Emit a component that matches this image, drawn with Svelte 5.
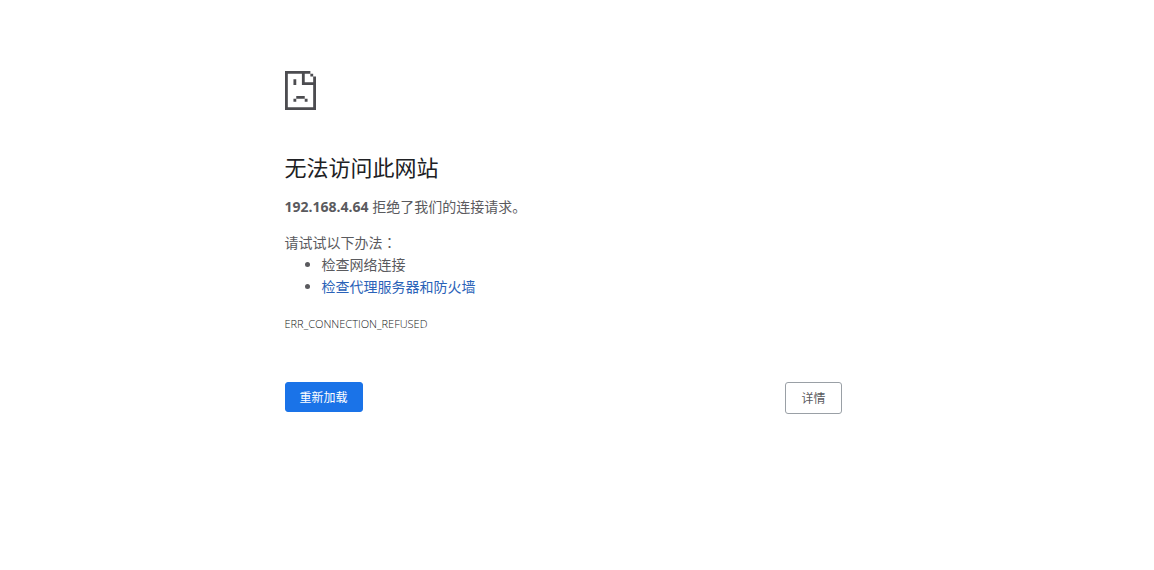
<script lang="ts">
	const host = '192.168.4.64';
	const errorCode = 'ERR_CONNECTION_REFUSED';

	let showDetails = $state(false);

	function reload() {
		location.reload();
	}
</script>

<main class="error-page">
	<div class="content">
		<svg class="icon" viewBox="0 0 11 14" preserveAspectRatio="none" aria-hidden="true">
			<path
				fill-rule="evenodd"
				d="M0 0H9V1H10V2H11V14H0ZM1 1V13H10V5H6V1ZM7 1V4H10V2H9V1Z"
			/>
			<path d="M3 3h1v2H3zM4 9h3v1H4zM3 10h1v1H3zM7 10h1v1H7z" />
		</svg>

		<h1>无法访问此网站</h1>
		<p><strong>{host}</strong> 拒绝了我们的连接请求。</p>

		<div class="suggestions">
			<p>请试试以下办法<span class="colon">：</span></p>
			<ul>
				<li>检查网络连接</li>
				<li><a href="#details" onclick={() => (showDetails = true)}>检查代理服务器和防火墙</a></li>
			</ul>
		</div>

		<p class="error-code">{errorCode}</p>

		<div class="actions">
			<button class="reload" onclick={reload}>重新加载</button>
			<button class="details" aria-expanded={showDetails} onclick={() => (showDetails = !showDetails)}>详情</button>
		</div>
	</div>
</main>

<style>
	:global(body) {
		background: #fff;
	}

	.error-page {
		padding: 71px 28px 0 0;
		color: #5a5a5e;
		font-family: 'Open Sans', 'Noto Sans CJK SC', sans-serif;
		font-size: 14px;
		line-height: 22px;
	}

	.content {
		max-width: 557px;
		margin: 0 auto;
	}

	.icon {
		display: block;
		width: 31px;
		height: 39px;
		fill: #4c4c50;
	}

	h1 {
		margin: 41px 0 13px;
		color: #202124;
		font-size: 22px;
		font-weight: 400;
		line-height: 32px;
	}

	p {
		margin: 0;
	}

	.suggestions {
		margin-top: 14px;
	}

	.colon {
		font-family: 'Open Sans', 'Noto Sans CJK TC', sans-serif;
	}

	ul {
		margin: 0;
		padding-left: 37px;
	}

	a {
		color: #2a62b8;
		text-decoration: none;
	}

	.error-code {
		margin-top: 15px;
		color: #202124;
		font-size: 11px;
		font-weight: 300;
	}

	.actions {
		display: flex;
		align-items: flex-start;
		justify-content: space-between;
		margin-top: 47px;
	}

	button {
		box-sizing: border-box;
		height: 32px;
		padding: 0 15px;
		border: 1px solid #9aa0a6;
		border-radius: 3px;
		background: #fff;
		color: #5a5a5e;
		font-family: inherit;
		font-size: 12px;
		cursor: pointer;
	}

	.reload {
		height: 30px;
		padding: 0 14px;
		border-color: #1a73e8;
		background: #1a73e8;
		color: #fff;
	}
</style>
